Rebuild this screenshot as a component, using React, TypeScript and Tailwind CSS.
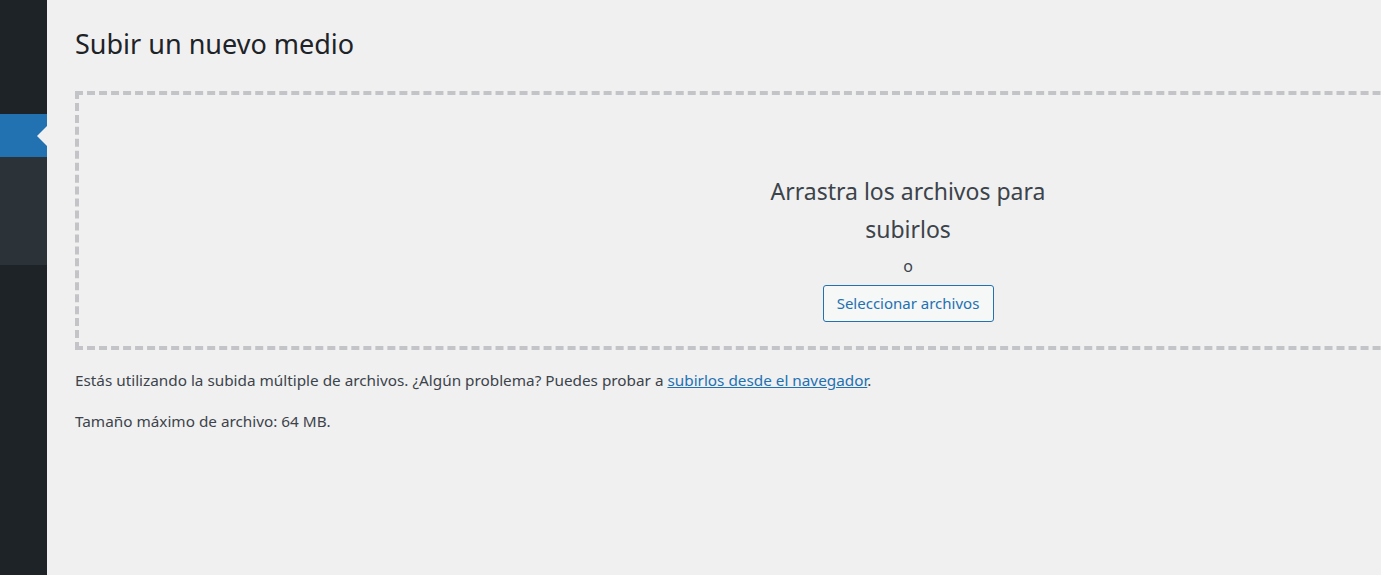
import React from 'react';

export default function App() {
  return (
    <div className="flex h-[575px] w-full overflow-hidden bg-[#f0f0f1] font-['Noto_Sans',sans-serif] text-[#3c434a]">
      {/* Admin menu */}
      <aside className="flex w-[47px] shrink-0 flex-col bg-[#1d2327]">
        <div className="h-[114px]" />
        <div className="relative h-[43px] bg-[#2271b1]">
          <span className="absolute right-0 top-[12px] h-0 w-0 border-y-[10px] border-r-[10px] border-y-transparent border-r-[#f0f0f1]" />
        </div>
        <div className="h-[108px] bg-[#2c3338]" />
      </aside>

      {/* Content */}
      <main className="min-w-0 flex-1 pl-[28px]">
        <h1 className="mt-[27px] text-[27px] leading-[34px] font-normal text-[#1d2327]">Subir un nuevo medio</h1>

        <div className="mt-[30px] w-[1666px] shrink-0 border-4 border-dashed border-[#c3c4c7] pt-[77px] pb-[24px]">
          <div className="mx-auto flex w-[320px] flex-col items-center text-center">
            <p className="text-[23px] leading-[38px] text-[#3c434a]">Arrastra los archivos para subirlos</p>
            <p className="mt-[8px] text-[16px] leading-[20px]">o</p>
            <button className="mt-[9px] h-[37px] w-[171px] rounded-[3px] border border-[#2271b1] bg-[#f6f7f7] text-[15px] text-[#2271b1]">
              Seleccionar archivos
            </button>
          </div>
        </div>

        <p className="mt-[20px] text-[15.3px] leading-[20px]">
          Estás utilizando la subida múltiple de archivos. ¿Algún problema? Puedes probar a{' '}
          <a href="#" className="text-[#2271b1] underline">subirlos desde el navegador</a>.
        </p>
        <p className="mt-[21px] text-[15.3px] leading-[20px]">Tamaño máximo de archivo: 64 MB.</p>
      </main>
    </div>
  );
}
